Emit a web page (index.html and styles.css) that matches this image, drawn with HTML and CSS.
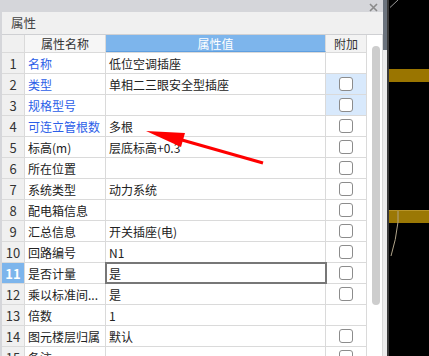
FILE: index.html
```html
<!DOCTYPE html>
<html>
<head>
<meta charset="utf-8">
<link rel="stylesheet" href="styles.css">
</head>
<body>
<div class="screen">
  <div class="panel">
    <div class="topbar">
      <svg class="close" width="9" height="9" viewBox="0 0 9 9"><path d="M1 1L8 8M8 1L1 8" stroke="#8a8a8a" stroke-width="1.6"/></svg>
    </div>
    <div class="inner">
      <div class="title">属性</div>
      <div class="grid-wrap">
        <div class="table">
          <div class="row head">
            <div class="c num"></div>
            <div class="c name">属性名称</div>
            <div class="c val">属性值</div>
            <div class="c att">附加</div>
          </div>
          <div class="row"><div class="c num">1</div><div class="c name blue">名称</div><div class="c val">低位空调插座</div><div class="c att"></div></div>
          <div class="row"><div class="c num">2</div><div class="c name blue">类型</div><div class="c val">单相二三眼安全型插座</div><div class="c att hl"><span class="cb"></span></div></div>
          <div class="row"><div class="c num">3</div><div class="c name blue">规格型号</div><div class="c val"></div><div class="c att hl"><span class="cb"></span></div></div>
          <div class="row"><div class="c num">4</div><div class="c name blue">可连立管根数</div><div class="c val">多根</div><div class="c att"><span class="cb"></span></div></div>
          <div class="row"><div class="c num">5</div><div class="c name">标高(m)</div><div class="c val">层底标高+0.3</div><div class="c att"><span class="cb"></span></div></div>
          <div class="row"><div class="c num">6</div><div class="c name">所在位置</div><div class="c val"></div><div class="c att"><span class="cb"></span></div></div>
          <div class="row"><div class="c num">7</div><div class="c name">系统类型</div><div class="c val">动力系统</div><div class="c att"><span class="cb"></span></div></div>
          <div class="row"><div class="c num">8</div><div class="c name">配电箱信息</div><div class="c val"></div><div class="c att"><span class="cb"></span></div></div>
          <div class="row"><div class="c num">9</div><div class="c name">汇总信息</div><div class="c val">开关插座(电)</div><div class="c att"><span class="cb"></span></div></div>
          <div class="row"><div class="c num">10</div><div class="c name">回路编号</div><div class="c val">N1</div><div class="c att"><span class="cb"></span></div></div>
          <div class="row sel"><div class="c num">11</div><div class="c name">是否计量</div><div class="c val edit">是</div><div class="c att"><span class="cb"></span></div></div>
          <div class="row"><div class="c num">12</div><div class="c name">乘以标准间...</div><div class="c val">是</div><div class="c att"><span class="cb"></span></div></div>
          <div class="row"><div class="c num">13</div><div class="c name">倍数</div><div class="c val">1</div><div class="c att"></div></div>
          <div class="row"><div class="c num">14</div><div class="c name">图元楼层归属</div><div class="c val">默认</div><div class="c att"><span class="cb"></span></div></div>
          <div class="row"><div class="c num">15</div><div class="c name">备注</div><div class="c val"></div><div class="c att"><span class="cb"></span></div></div>
        </div>
        <div class="vscroll"><div class="thumb"></div></div>
      </div>
    </div>
  </div>
  <div class="edge"><div class="edge-dark"></div></div>
  <div class="divider"></div>
  <div class="canvas">
    <svg width="40" height="356" viewBox="389 0 40 356">
      <line x1="390" y1="7.5" x2="398" y2="0" stroke="#9a9a9a" stroke-width="1"/>
      <rect x="389" y="69" width="40" height="13" fill="#9a7500"/>
      <rect x="389" y="210" width="40" height="13" fill="#9b7805"/>
      <line x1="389" y1="210.5" x2="429" y2="210.5" stroke="#b8952a" stroke-width="1"/>
      <path d="M398 211 L398 222 Q396 240 391 256" fill="none" stroke="#b0a48a" stroke-width="1"/>
    </svg>
  </div>
  <svg class="arrow" width="429" height="356" viewBox="0 0 429 356">
    <line x1="182" y1="140" x2="263" y2="163" stroke="#ff0000" stroke-width="3.2"/>
    <polygon points="146,131 185,133 181,147" fill="#ff0000"/>
  </svg>
</div>
</body>
</html>
```

FILE: styles.css
```css
* { box-sizing: border-box; }
html, body {
  margin: 0;
  padding: 0;
  background: #000;
}
.screen {
  position: relative;
  width: 429px;
  height: 356px;
  overflow: hidden;
  display: flex;
  font-family: "Noto Sans CJK SC", "Noto Sans", sans-serif;
  font-size: 12px;
  color: #222;
}
.panel {
  width: 383px;
  height: 356px;
  background: #d5d6da;
  display: flex;
  flex-direction: column;
  flex: none;
}
.topbar {
  height: 12px;
  flex: none;
  display: flex;
  justify-content: flex-end;
  align-items: center;
  padding-right: 5px;
}
.close { display: block; margin-top: 2px; }
.inner {
  margin-left: 2px;
  flex: 1;
  display: flex;
  flex-direction: column;
  min-height: 0;
}
.title {
  height: 23px;
  flex: none;
  background: #f0f0f0;
  border-bottom: 1px solid #cfd0d3;
  padding-left: 9px;
  line-height: 22px;
  font-size: 12.5px;
  color: #444;
}
.grid-wrap {
  flex: 1;
  display: flex;
  min-height: 0;
  background: #fff;
}
.table {
  width: 365px;
  flex: none;
  overflow: hidden;
}
.row {
  display: flex;
  height: 21px;
  border-bottom: 1px solid #dadada;
}
.row.head {
  height: 18px;
}
.c {
  border-right: 1px solid #dadada;
  height: 100%;
  display: flex;
  align-items: center;
  white-space: nowrap;
  overflow: hidden;
}
.num {
  width: 23px;
  background: #f0f0f0;
  justify-content: center;
  color: #333;
  font-size: 13px;
}
.name {
  width: 81px;
  padding-left: 3px;
  color: #222;
}
.name.blue { color: #2b5ee8; }
.val {
  width: 220px;
  padding-left: 3px;
}
.att {
  width: 41px;
  justify-content: center;
}
.att.hl { background: #d8e9fc; }
.head .num { background: #f0f0f0; }
.head .name {
  background: #f6f6f6;
  justify-content: center;
  padding-left: 0;
  color: #333;
}
.head .val {
  background: #7db5ec;
  color: #fff;
  justify-content: center;
  padding-left: 0;
  border-bottom: 1px solid #5f9fe0;
}
.head .att {
  background: #f3f3f3;
  color: #333;
}
.sel .num {
  background: #7db5ec;
  color: #fff;
  font-weight: bold;
}
.edit {
  outline: 2px solid #777;
  outline-offset: -1px;
  position: relative;
}
.cb {
  width: 14px;
  height: 14px;
  border: 1px solid #8c8c8c;
  border-radius: 3px;
  background: #fff;
  display: block;
}
.vscroll {
  width: 16px;
  flex: none;
  border-right: 1px solid #d8d8d8;
  background: #fff;
  padding-top: 11px;
  padding-left: 5px;
}
.thumb {
  width: 8px;
  height: 259px;
  background: #cdcdcd;
  border-radius: 4px;
}
.edge {
  width: 4px;
  flex: none;
  background: #ececec;
}
.edge-dark {
  height: 50px;
  background: #6b737d;
}
.divider {
  width: 2px;
  flex: none;
  background: #3a3a3a;
}
.canvas {
  flex: 1;
  background: #000;
}
.canvas svg { display: block; }
.arrow {
  position: absolute;
  left: 0;
  top: 0;
  pointer-events: none;
}
```
